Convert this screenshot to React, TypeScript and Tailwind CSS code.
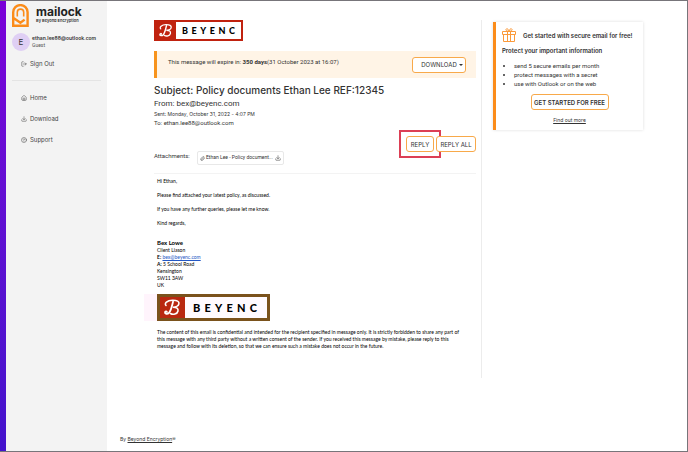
import React from "react";
import { House, Download, CircleHelp, LogOut, Paperclip } from "lucide-react";

const body = "font-['Lato',sans-serif]";

function MailockMark() {
  return (
    <svg viewBox="0 0 17 23" className="h-[23px] w-[17px] shrink-0" fill="none" stroke="#fb8c1a" strokeWidth="2.4" aria-hidden="true">
      <path d="M1.2 13.500V8.300a7.200 7.200 0 0 1 14.400 0v13.400H1.200V13.800l7.200 5 4.200-3.200" />
      <path d="M5.300 12.500V8.300a3.200 3.200 0 0 1 6.400 0v4.200" strokeWidth="1.600" />
    </svg>
  );
}

function GiftIcon() {
  return (
    <svg viewBox="0 0 14 14" className="size-[14px] shrink-0" fill="none" stroke="#fb9a3a" strokeWidth="1" aria-hidden="true">
      <path d="M.5 3.500h13v3H.5zM1.500 6.500h11v7h-11zM5.500 3.500v10M8.500 3.500v10" />
      <path d="M7 3.300C5.500 3.300 3.500 2.800 4 1.300 4.600 0 6.600 1 7 3.300 7.400 1 9.400 0 10 1.300c.5 1.500-1.500 2-3 2" />
    </svg>
  );
}

function BeyencLogo({ signature = false }: { signature?: boolean }) {
  return (
    <div
      role="img"
      aria-label="Beyenc"
      className={
        signature
          ? "flex h-[27px] w-[113px] border-3 border-[#7a521c] bg-[#fffafe]"
          : "flex h-[21px] w-[89px] border-2 border-[#c0220f] bg-white"
      }
    >
      <svg viewBox="0 0 24 21" className={signature ? "h-[21px] w-[25px] bg-[#b92810]" : "h-[17px] w-[20px] bg-[#c0220f]"} fill="none" stroke="white" strokeLinecap="round" aria-hidden="true">
        <path d="M5.500 8.500C3.500 6.500 6.500 3.400 12 3.300c4.500-.1 7 1.200 6.400 3.600-.5 2.200-3 3.200-6 3.300 3.600 0 5.600 1.300 5.100 3.800-.7 3.300-5.200 4-7.500 2.500" strokeWidth="1.600" />
        <path d="M12.600 4.500C11.400 9 10.800 13.500 8.400 16c-1.500 1.400-4.200 1-3.900-.8.200-1.100 1.500-1.100 1.900-.3" strokeWidth="1.800" />
      </svg>
      <span
        className={
          signature
            ? "flex flex-1 items-center justify-between pr-2.5 pl-2 font-['Lato',sans-serif] text-[11px] leading-none font-black text-black"
            : "flex flex-1 items-center justify-between px-1.5 font-['Lato',sans-serif] text-[9px] leading-none font-black text-black"
        }
      >
        {["B", "E", "Y", "E", "N", "C"].map((c, i) => (
          <span key={i}>{c}</span>
        ))}
      </span>
    </div>
  );
}

const outline = "rounded-[3px] border border-[#f8a94a] bg-white text-[#333]";

function NavItem({ icon, label }: { icon: React.ReactNode; label: string }) {
  return (
    <a href="#" className="flex h-[21px] items-center gap-[3px] pl-[9px] text-[6px] text-[#444]">
      {icon}
      {label}
    </a>
  );
}

export default function App() {
  return (
    <div className="flex min-h-screen border-t border-r border-b border-[#77757a] bg-white font-['Inter',sans-serif] text-[#333]">
      <div className="w-1.5 shrink-0 bg-linear-to-b from-[#7a00d8] to-[#4312cc]" />
      <aside className="w-[101px] shrink-0 bg-[#f3f3f3] pt-[3px] pl-1.5">
        <div className="flex gap-[7px]">
          <MailockMark />
          <div className="pt-[2px]">
            <div className="text-[12px] leading-[12px] font-bold text-[#222]">mailock</div>
            <div className="text-[4px] leading-[5px] font-semibold whitespace-nowrap">By Beyond Encryption</div>
          </div>
        </div>
        <div className="mt-[6px] flex items-center gap-[2px]">
          <div className="flex size-[18px] shrink-0 items-center justify-center rounded-full bg-[#dfcff4] text-[8px]">E</div>
          <div className="whitespace-nowrap">
            <div className="text-[5px] leading-[7px] font-semibold">ethan.lee88@outlook.com</div>
            <div className="font-['Roboto',sans-serif] text-[5px] leading-[7px] text-[#555]">Guest</div>
          </div>
        </div>
        <nav className="mt-[2px] pr-1.5">
          <NavItem icon={<LogOut className="size-[6px]" />} label="Sign Out" />
          <hr className="my-[6px] border-[#e4e4e4]" />
          <NavItem icon={<House className="size-[6px]" />} label="Home" />
          <NavItem icon={<Download className="size-[6px]" />} label="Download" />
          <NavItem icon={<CircleHelp className="size-[6px]" />} label="Support" />
        </nav>
      </aside>

      <div className="flex min-w-0 flex-1 flex-col">
        <div className="flex flex-1 items-start pt-[19px] pl-[47px]">
          <main className="w-[328px] shrink-0 border-r border-[#ececec] pr-[5px] pb-7 font-['Roboto',sans-serif]">
            <BeyencLogo />
            <section className="mt-[10px] flex h-[27px] items-center justify-between border-l-3 border-[#f7941e] bg-[#fff4e6] pr-[10px] pl-[11px]">
              <p className="pb-[6px] text-[6px]">
                This message will expire in: <b>350 days</b>(31 October 2023 at 16:07)
              </p>
              <button className={`${outline} flex h-4 w-[54px] items-center justify-center gap-[2px] pl-1.5 font-['Inter',sans-serif] text-[6px]`}>
                DOWNLOAD
                <span className="border-x-2 border-t-2 border-x-transparent border-t-[#333]" />
              </button>
            </section>
            <h1 className="mt-[5px] font-['Inter',sans-serif] text-[10px] leading-[14px] font-medium">Subject: Policy documents Ethan Lee REF:12345</h1>
            <p className="mt-[1px] text-[8px] leading-[12px]">From: bex@beyenc.com</p>
            <p className="font-['Inter',sans-serif] text-[5px] leading-[8px]">Sent: Monday, October 31, 2022 - 4:07 PM</p>
            <p className="text-[6px] leading-[9px]">To: ethan.lee88@outlook.com</p>

            <div className="mt-[3px] flex h-[28px] justify-end font-['Inter',sans-serif]">
              <div className="flex h-[28px] items-center border-2 border-[#dc3f55] px-[5px]">
                <button className={`${outline} h-4 w-[28px] text-[6px]`}>REPLY</button>
              </div>
              <button className={`${outline} mt-1.5 -ml-[5px] h-4 w-[40px] text-[6px]`}>REPLY ALL</button>
            </div>

            <div className="-mt-[7px] flex items-start text-[6px]">
              <span className="w-[43px]">Attachments:</span>
              <a href="#" className="flex h-[14px] w-[87px] items-center gap-px rounded-[2px] border border-[#e8e8e8] px-[2px] text-[5px]">
                <Paperclip className="size-[5px]" />
                <span className="flex-1 whitespace-nowrap">Ethan Lee - Policy document...</span>
                <Download className="size-[6px]" />
              </a>
            </div>

            <article className={`mt-[8px] border-t border-[#f3f3f3] pt-1 pl-[3px] text-[5px] leading-[7px] text-black ${body}`}>
              <p>Hi Ethan,</p>
              <p className="mt-[7px]">Please find attached your latest policy, as discussed.</p>
              <p className="mt-[7px]">If you have any further queries, please let me know.</p>
              <p className="mt-[7px]">Kind regards,</p>
              <p className="mt-3 text-[6px] leading-[8px] font-bold">Bex Lowe</p>
              <p>Client Liason</p>
              <p><b>E:</b> <a href="#" className="text-[#2458c5] underline">bex@beyenc.com</a></p>
              <p><b>A:</b> 5 School Road</p>
              <p>Kensington</p>
              <p>SW11 3AW</p>
              <p>UK</p>
              <div className="mt-[5px] mb-2 -ml-[13px] w-[126px] bg-[#fff4fc] pl-[13px]"><BeyencLogo signature /></div>
              <p className="pr-2">The content of this email is confidential and intended for the recipient specified in message only. It is strictly forbidden to share any part of this message with any third party without a written consent of the sender. If you received this message by mistake, please reply to this message and follow with its deletion, so that we can ensure such a mistake does not occur in the future.</p>
            </article>
          </main>

          <aside className="mt-[2px] ml-[11px] h-[108px] w-[150px] border-l-3 border-[#fb8c1a] bg-white px-1.5 pt-1.5 shadow-[0_0_3px_#ddd]">
            <div className="flex items-center gap-[7px]">
              <GiftIcon />
              <b className="text-[6px] font-semibold whitespace-nowrap">Get started with secure email for free!</b>
            </div>
            <h2 className="mt-[4px] text-[6px] leading-[9px] font-semibold">Protect your important information</h2>
            <ul className="mt-[6px] list-disc pl-3 font-['Roboto',sans-serif] text-[6px] leading-[9px]">
              <li>send 5 secure emails per month</li>
              <li>protect messages with a secret</li>
              <li>use with Outlook or on the web</li>
            </ul>
            <div className="mt-[6px] flex flex-col items-center">
              <button className={`${outline} h-4 w-[78px] text-[6px] font-semibold whitespace-nowrap`}>GET STARTED FOR FREE</button>
              <a href="#" className="mt-[6px] text-[5px] leading-[8px] underline">Find out more</a>
            </div>
          </aside>
        </div>
        <footer className="pb-2 pl-[13px] text-[5px] leading-[8px]">
          By <a href="#" className="underline">Beyond Encryption</a>®
        </footer>
      </div>
    </div>
  );
}
